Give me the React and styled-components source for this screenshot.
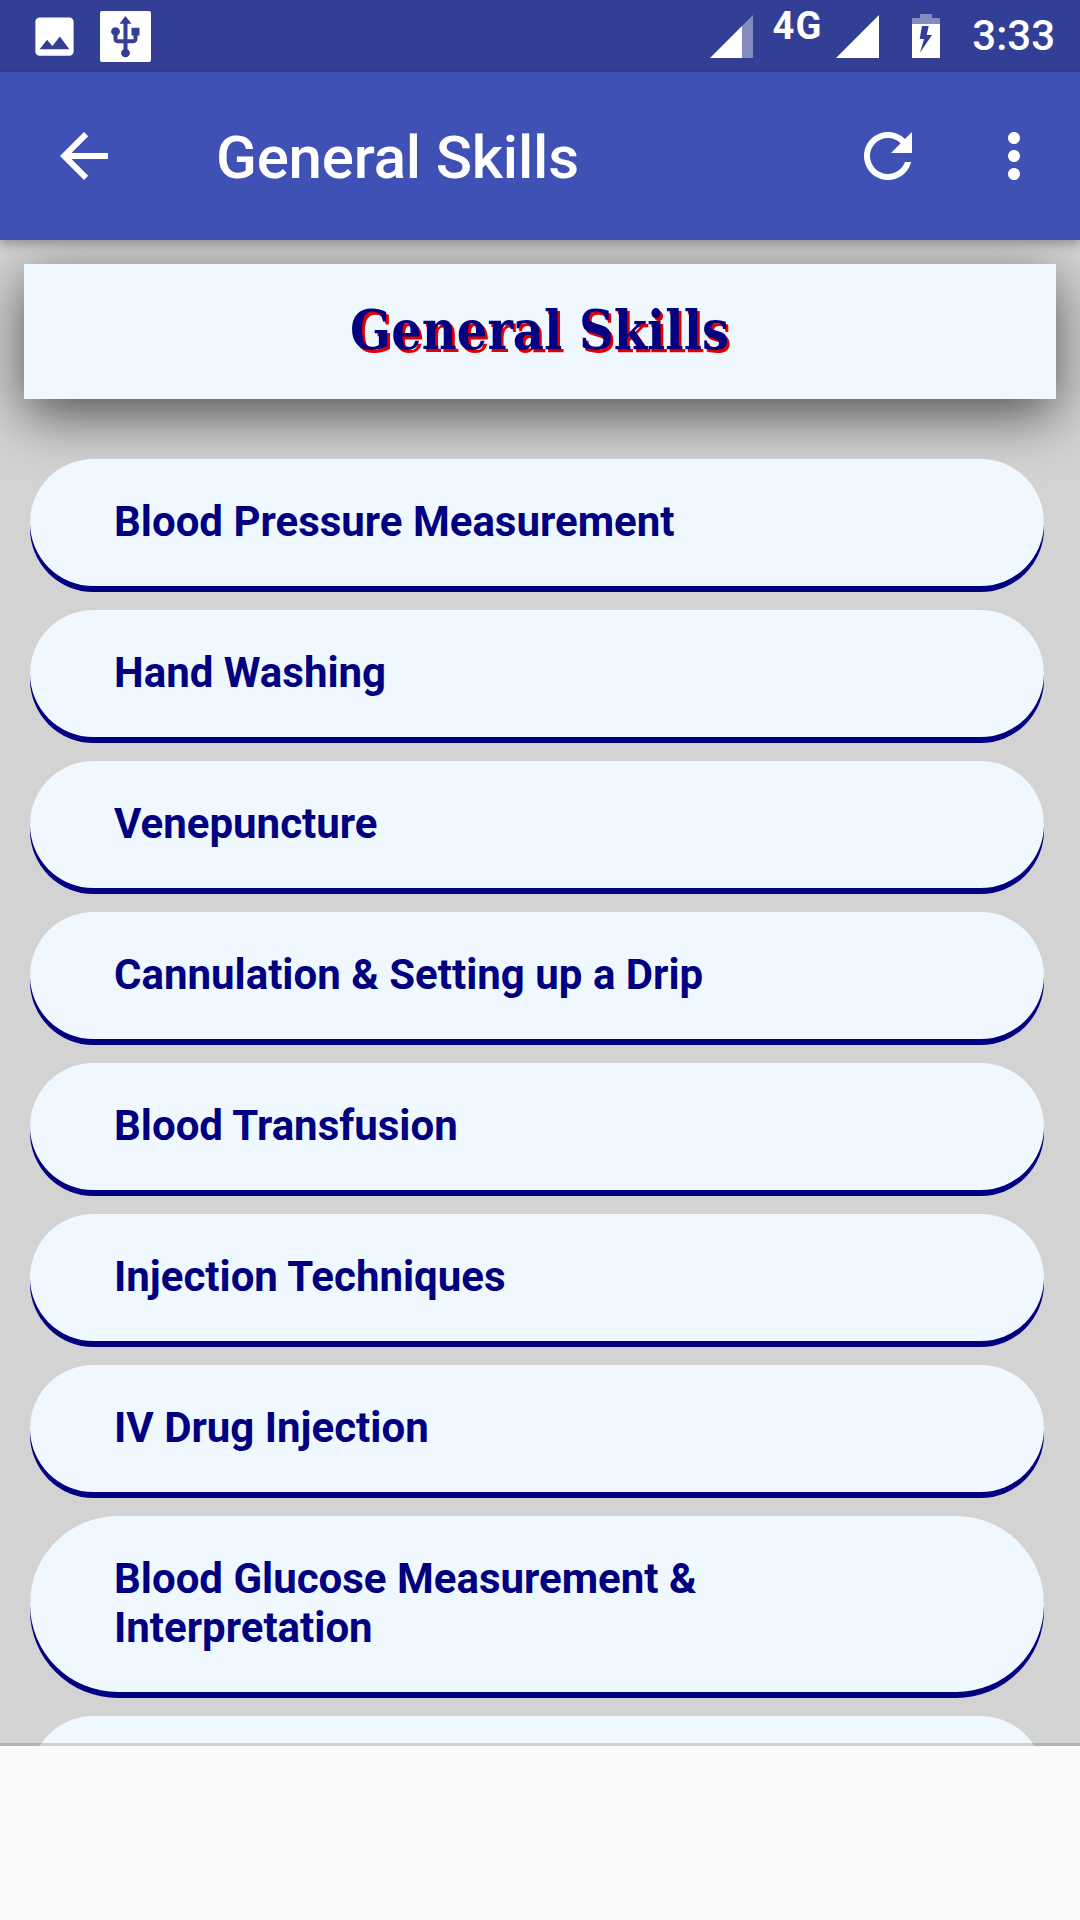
import React from "react";
import styled, { createGlobalStyle } from "styled-components";

const GlobalStyle = createGlobalStyle`
  html, body {
    margin: 0;
    padding: 0;
    width: 1080px;
    height: 1920px;
    overflow: hidden;
  }
`;

const Screen = styled.div`
  width: 1080px;
  height: 1920px;
  display: flex;
  flex-direction: column;
  font-family: Roboto, "Liberation Sans", sans-serif;
  background-color: #d3d3d3;
`;

const StatusBar = styled.div`
  height: 72px;
  flex: none;
  display: flex;
  align-items: center;
  padding: 0 25px 0 29px;
  background-color: #333f94;
  color: #fff;
`;

const StatusLeft = styled.div`
  display: flex;
  align-items: center;
  gap: 20px;
  flex: 1;
`;

const StatusIcon = styled.svg`
  display: block;
  flex: none;
  width: ${(p) => p.$w}px;
  height: ${(p) => p.$h}px;
  margin-left: ${(p) => p.$ml || 0}px;
  fill: currentColor;
`;

const NetworkLabel = styled.span`
  font-size: 38px;
  line-height: 38px;
  font-weight: 700;
  margin: -21px 0 0 20px;
  letter-spacing: 1px;
`;

const Clock = styled.span`
  font-size: 42px;
  line-height: 72px;
  font-weight: 500;
  margin-left: 32px;
`;

const Toolbar = styled.header`
  position: relative;
  z-index: 2;
  height: 168px;
  flex: none;
  display: flex;
  align-items: center;
  padding: 0 30px 0 48px;
  background-color: #3f51b5;
  color: #fff;
  box-shadow: 0 4px 10px rgba(0, 0, 0, 0.3);
`;

const ToolbarIcon = styled.svg`
  display: block;
  flex: none;
  width: 72px;
  height: 72px;
  fill: currentColor;
  margin-left: ${(p) => p.$ml || 0}px;
`;

const ToolbarTitle = styled.h1`
  flex: 1;
  margin: 4px 0 0 96px;
  font-size: 60px;
  line-height: 72px;
  font-weight: 500;
  letter-spacing: -0.2px;
`;

const Content = styled.main`
  flex: 1;
  min-height: 0;
  overflow: hidden;
  padding: 24px 24px 0;
`;

const HeadingCard = styled.div`
  height: 135px;
  display: flex;
  align-items: center;
  justify-content: center;
  background-color: aliceblue;
  box-shadow: 0 16px 56px rgba(0, 0, 0, 0.62);
`;

const HeadingText = styled.h2`
  margin: 0 0 4px;
  font-family: "DejaVu Serif", "Liberation Serif", serif;
  font-size: 55px;
  font-weight: 700;
  color: navy;
  text-shadow: 3px 3px 0 #e00000;
  transform: scaleX(0.875);
`;

const SkillList = styled.ul`
  list-style: none;
  margin: 60px 0 0;
  padding: 0 12px 0 6px;
  display: flex;
  flex-direction: column;
  gap: 24px;
`;

const SkillRow = styled.li`
  flex: none;
  min-height: 49px;
  padding: 38px 90px 40px 84px;
  font-size: 42px;
  line-height: 49px;
  font-weight: 700;
  color: navy;
  background-color: aliceblue;
  border-radius: 90px;
  box-shadow: 0 6px 0 navy;
`;

const BottomPanel = styled.div`
  position: relative;
  z-index: 2;
  height: 174px;
  flex: none;
  background-color: #fafafa;
  box-shadow: 0 -3px 0 rgba(0, 0, 0, 0.15);
`;

const skills = [
  "Blood Pressure Measurement",
  "Hand Washing",
  "Venepuncture",
  "Cannulation & Setting up a Drip",
  "Blood Transfusion",
  "Injection Techniques",
  "IV Drug Injection",
  "Blood Glucose Measurement & Interpretation",
  "",
];

const App = () => {
  return (
    <Screen>
      <GlobalStyle />
      <StatusBar>
        <StatusLeft>
          <StatusIcon $w={51} $h={51} viewBox="0 0 24 24">
            <path d="M21 19V5c0-1.1-.9-2-2-2H5c-1.1 0-2 .9-2 2v14c0 1.1.9 2 2 2h14c1.1 0 2-.9 2-2zM8.5 13.5l2.5 3.01L14.5 12l4.5 6H5l3.5-4.5z" />
          </StatusIcon>
          <StatusIcon $w={51} $h={51} viewBox="0 0 51 51">
            <rect width="51" height="51" rx="2" />
            <path
              fill="#333f94"
              transform="translate(1.5 3) scale(2 1.95)"
              d="M15 7v4h1v2h-3V5h2l-3-4-3 4h2v8H8v-2.07c.7-.37 1.2-1.08 1.2-1.93 0-1.21-.99-2.2-2.2-2.2-1.21 0-2.2.99-2.2 2.2 0 .85.5 1.56 1.2 1.93V13c0 1.11.89 2 2 2h3v3.05c-.71.37-1.2 1.1-1.2 1.95 0 1.22.99 2.2 2.2 2.2 1.21 0 2.2-.98 2.2-2.2 0-.85-.49-1.58-1.2-1.95V15h3c1.11 0 2-.89 2-2v-2h1V7h-4z"
            />
          </StatusIcon>
        </StatusLeft>
        <StatusIcon $w={43} $h={43} viewBox="0 0 43 43">
          <polygon points="0,43 32,11 32,43" />
          <polygon points="32,11 43,0 43,43 32,43" opacity="0.4" />
        </StatusIcon>
        <NetworkLabel>4G</NetworkLabel>
        <StatusIcon $w={43} $h={43} $ml={14} viewBox="0 0 43 43">
          <polygon points="0,43 43,0 43,43" />
        </StatusIcon>
        <StatusIcon $w={28} $h={44} $ml={33} viewBox="0 0 28 44">
          <polygon opacity="0.4" points="8,0 20,0 20,4 28,4 28,10 0,10 0,4 8,4" />
          <path d="M0 10h28v34H0z" />
          <polygon fill="#333f94" points="10,12 16.7,12 14.7,21 20,21 8,38.7 12,25 7.7,25" />
        </StatusIcon>
        <Clock>3:33</Clock>
      </StatusBar>

      <Toolbar>
        <ToolbarIcon viewBox="0 0 24 24">
          <path d="M20 11H7.83l5.59-5.59L12 4l-8 8 8 8 1.41-1.41L7.83 13H20v-2z" />
        </ToolbarIcon>
        <ToolbarTitle>General Skills</ToolbarTitle>
        <ToolbarIcon viewBox="0 0 24 24">
          <path d="M17.65 6.35C16.2 4.9 14.21 4 12 4c-4.42 0-7.99 3.58-7.99 8s3.57 8 7.99 8c3.73 0 6.84-2.55 7.73-6h-2.08c-.82 2.33-3.04 4-5.65 4-3.31 0-6-2.69-6-6s2.69-6 6-6c1.66 0 3.14.69 4.22 1.78L13 11h7V4l-2.35 2.35z" />
        </ToolbarIcon>
        <ToolbarIcon $ml={54} viewBox="0 0 24 24">
          <path d="M12 8c1.1 0 2-.9 2-2s-.9-2-2-2-2 .9-2 2 .9 2 2 2zm0 2c-1.1 0-2 .9-2 2s.9 2 2 2 2-.9 2-2-.9-2-2-2zm0 6c-1.1 0-2 .9-2 2s.9 2 2 2 2-.9 2-2-.9-2-2-2z" />
        </ToolbarIcon>
      </Toolbar>

      <Content>
        <HeadingCard>
          <HeadingText>General Skills</HeadingText>
        </HeadingCard>
        <SkillList>
          {skills.map((skill, i) => (
            <SkillRow key={i}>{skill}</SkillRow>
          ))}
        </SkillList>
      </Content>

      <BottomPanel />
    </Screen>
  );
};

export default App;
